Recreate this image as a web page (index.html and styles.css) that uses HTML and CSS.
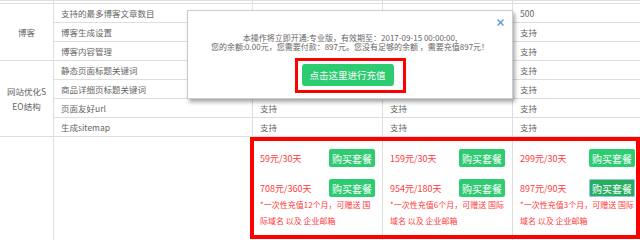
FILE: index.html
```html
<!DOCTYPE html>
<html lang="zh-CN">
<head>
    <meta charset="UTF-8">
    <title>套餐升级</title>
    <link rel="stylesheet" href="styles.css">
</head>
<body>
    <div class="page">
        <table class="grid">
            <colgroup>
                <col class="c-group">
                <col class="c-name">
                <col class="c-plan">
                <col class="c-plan">
                <col class="c-plan">
            </colgroup>
            <tr class="cut"><td></td><td></td><td></td><td></td><td></td></tr>
            <tr>
                <td rowspan="3" class="group">博客</td>
                <td>支持的最多博客文章数目</td><td></td><td></td><td>500</td>
            </tr>
            <tr><td>博客生成设置</td><td></td><td></td><td>支持</td></tr>
            <tr><td>博客内容管理</td><td></td><td></td><td>支持</td></tr>
            <tr>
                <td rowspan="4" class="group">网站优化SEO结构</td>
                <td>静态页面标题关键词</td><td></td><td></td><td>支持</td>
            </tr>
            <tr><td>商品详细页标题关键词</td><td></td><td></td><td>支持</td></tr>
            <tr><td>页面友好url</td><td>支持</td><td>支持</td><td>支持</td></tr>
            <tr><td>生成sitemap</td><td>支持</td><td>支持</td><td>支持</td></tr>
            <tr class="plans">
                <td></td>
                <td></td>
                <td class="plan">
                    <div class="price-row"><span class="price">59元/30天</span><button class="buy">购买套餐</button></div>
                    <div class="price-row"><span class="price">708元/360天</span><button class="buy">购买套餐</button></div>
                    <p class="note">*一次性充值12个月，可赠送 国际域名 以及 企业邮箱</p>
                </td>
                <td class="plan">
                    <div class="price-row"><span class="price">159元/30天</span><button class="buy">购买套餐</button></div>
                    <div class="price-row"><span class="price">954元/180天</span><button class="buy">购买套餐</button></div>
                    <p class="note">*一次性充值6个月，可赠送 国际域名 以及 企业邮箱</p>
                </td>
                <td class="plan">
                    <div class="price-row"><span class="price">299元/30天</span><button class="buy">购买套餐</button></div>
                    <div class="price-row"><span class="price">897元/90天</span><button class="buy active">购买套餐</button></div>
                    <p class="note">*一次性充值3个月，可赠送 国际域名 以及 企业邮箱</p>
                </td>
            </tr>
        </table>

        <!-- 标注框 -->
        <div class="mark"></div>

        <div class="dialog">
            <span class="close">
                <svg width="7" height="7" viewBox="0 0 7 7"><path d="M0.5 0.5L6.5 6.5M6.5 0.5L0.5 6.5" stroke="#5b9bd5" stroke-width="1.4" fill="none"/></svg>
            </span>
            <p class="msg">本操作将立即开通:专业版，有效期至：2017-09-15 00:00:00,<br>您的余额:0.00元，您需要付款：897元。您没有足够的余额 ，需要充值897元！</p>
            <div class="recharge-mark">
                <button class="recharge">点击这里进行充值</button>
            </div>
        </div>
    </div>
</body>
</html>
```

FILE: styles.css
```css
body {
    margin: 0;
    background-color: #fff;
    font-family: "Noto Sans CJK SC", "Microsoft YaHei", sans-serif;
    overflow: hidden;
}
.page {
    position: relative;
    width: 640px;
    height: 240px;
}
.grid {
    border-collapse: collapse;
    table-layout: fixed;
    width: 643px;
    margin-left: -1px;
    font-size: 8.5px;
    color: #666;
}
.c-group { width: 54px; }
.c-name { width: 199px; }
.c-plan { width: 130px; }
.grid td {
    border: 1px solid #dedede;
    height: 18px;
    padding: 0 7px;
    white-space: nowrap;
}
.grid .cut td {
    height: 2px;
    padding: 0;
}
.grid td.group {
    text-align: center;
    padding: 0 5px;
    line-height: 15px;
    white-space: normal;
    word-break: break-all;
}
.grid td.plan {
    vertical-align: top;
    padding: 12px 7px 0;
    height: 100px;
    white-space: normal;
}
.price-row {
    display: flex;
    justify-content: space-between;
    align-items: center;
    height: 18px;
}
.price-row + .price-row {
    margin-top: 12px;
}
.price {
    color: #ff3b3b;
    font-size: 9px;
}
.buy {
    width: 46px;
    height: 18px;
    padding: 0;
    border: 0;
    border-radius: 2px;
    background-color: #2ecc71;
    color: #fff;
    font-family: inherit;
    font-size: 10px;
}
.buy.active {
    background-color: #27ae60;
    box-shadow: inset 0 0 0 1px #8cc4f2;
}
.note {
    margin: 0;
    color: #ff3b3b;
    font-size: 8px;
    line-height: 16px;
}
.mark {
    position: absolute;
    left: 250px;
    top: 137px;
    width: 390px;
    height: 102px;
    border: 4px solid #f00;
    box-sizing: border-box;
}
.dialog {
    position: absolute;
    left: 187px;
    top: 10px;
    width: 326px;
    height: 89px;
    box-sizing: border-box;
    padding-top: 22px;
    background-color: #fff;
    border: 1px solid #ccc;
    box-shadow: 2px 3px 4px rgba(0, 0, 0, 0.35);
    text-align: center;
}
.close {
    position: absolute;
    top: 8px;
    right: 8px;
    line-height: 0;
}
.msg {
    margin: 0;
    font-size: 8px;
    line-height: 9px;
    color: #666;
}
.recharge-mark {
    display: inline-block;
    margin-top: 7px;
    padding: 3px 9px 4px 4px;
    border: 3px solid #f00;
    line-height: 0;
}
.recharge {
    width: 92px;
    height: 22px;
    padding: 0;
    border: 0;
    border-radius: 3px;
    background-color: #2ecc71;
    color: #fff;
    font-family: inherit;
    font-size: 9.5px;
}
```
